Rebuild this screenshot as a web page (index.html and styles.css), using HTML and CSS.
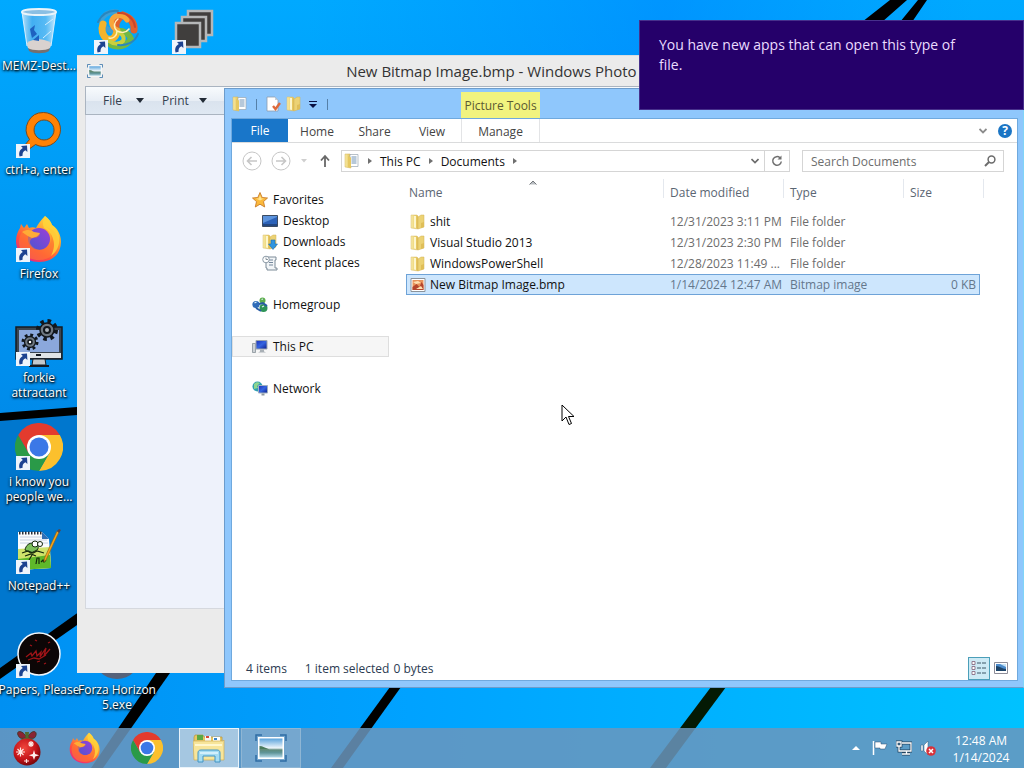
FILE: index.html
```html
<!DOCTYPE html>
<html lang="en">
<head>
<meta charset="UTF-8">
<title>Desktop</title>
<link rel="stylesheet" href="styles.css">
</head>
<body>
<svg class="defs" aria-hidden="true">
  <defs>
    <linearGradient id="sky" x1="0" y1="0" x2="0" y2="1">
      <stop offset="0" stop-color="#00a9ff"/>
      <stop offset="1" stop-color="#008bea"/>
    </linearGradient>
    <linearGradient id="floor" x1="0" y1="0" x2="1" y2="0">
      <stop offset="0" stop-color="#0090f2"/>
      <stop offset="0.4" stop-color="#00a2ff"/>
      <stop offset="1" stop-color="#00c2ff"/>
    </linearGradient>
    <linearGradient id="topShade" x1="0" y1="0" x2="1" y2="0">
      <stop offset="0.3" stop-color="#0080ff" stop-opacity="0"/>
      <stop offset="0.65" stop-color="#0078ff" stop-opacity="0.4"/>
      <stop offset="0.95" stop-color="#0080ff" stop-opacity="0"/>
    </linearGradient>
    <linearGradient id="foxBody" x1="0.9" y1="0" x2="0.2" y2="1">
      <stop offset="0" stop-color="#fff44f"/>
      <stop offset="0.35" stop-color="#ffa52e"/>
      <stop offset="0.7" stop-color="#ff4f3f"/>
      <stop offset="1" stop-color="#e5228d"/>
    </linearGradient>
    <linearGradient id="foxGlobe" x1="0" y1="1" x2="1" y2="0">
      <stop offset="0" stop-color="#4a56d0"/>
      <stop offset="1" stop-color="#9b3fd8"/>
    </linearGradient>
    <linearGradient id="folderFill" x1="0" y1="0" x2="1" y2="0">
      <stop offset="0" stop-color="#f8eca8"/>
      <stop offset="1" stop-color="#e2bd4c"/>
    </linearGradient>
    <linearGradient id="screenFill" x1="0" y1="0" x2="1" y2="1">
      <stop offset="0" stop-color="#1b2fb8"/>
      <stop offset="0.5" stop-color="#3565e0"/>
      <stop offset="1" stop-color="#0b1c8c"/>
    </linearGradient>
    <linearGradient id="glass" x1="0" y1="0" x2="1" y2="0">
      <stop offset="0" stop-color="#cfe9fa" stop-opacity="0.9"/>
      <stop offset="0.3" stop-color="#5eb2ec" stop-opacity="0.7"/>
      <stop offset="0.7" stop-color="#7cc2f0" stop-opacity="0.7"/>
      <stop offset="1" stop-color="#e4f4ff" stop-opacity="0.9"/>
    </linearGradient>
    <linearGradient id="photo" x1="0" y1="0" x2="0" y2="1">
      <stop offset="0" stop-color="#5aa3dc"/>
      <stop offset="0.5" stop-color="#eef6fb"/>
      <stop offset="0.6" stop-color="#5d8a7c"/>
      <stop offset="0.75" stop-color="#5f9599"/>
      <stop offset="1" stop-color="#b4d8e8"/>
    </linearGradient>
    <radialGradient id="ball" cx="0.4" cy="0.35" r="0.7">
      <stop offset="0" stop-color="#f0453c"/>
      <stop offset="0.6" stop-color="#c5141a"/>
      <stop offset="1" stop-color="#6d0509"/>
    </radialGradient>
  </defs>

  <symbol id="shortcut" viewBox="0 0 14 14">
    <path d="M0 0h14v14H0z" fill="#eef4fb"/>
    <path d="M5 2l6-.4L11.4 8 9.4 6.2C7 7.600 6.300 9 6.600 11.800L3.600 12.400C2.400 8.600 4 5.600 6.800 4z" fill="#1c4290"/>
  </symbol>

  <symbol id="firefox" viewBox="0 0 48 48">
    <path d="M30 1c4 3 6 6 7 9 5 3 9 9 9 17 0 12-9 20-22 20S1 38 1 26c0-6 2-10 4-13l1-4 3 4 3-4 2 4c2-1 5-1 7 0 2-4 5-8 9-12z" fill="url(#foxBody)"/>
    <circle cx="24" cy="24" r="11" fill="url(#foxGlobe)"/>
    <path d="M7 17c5-2 9-1 12 1l6 1c-1 3-4 4-7 4-3 1-4 4-2 7 4 6 12 6 17 1 6-6 4-15-2-19 9 2 13 9 12 18-2 10-10 15-19 15C12 45 4 38 4 27c0-4 1-7 3-10z" fill="#ff7a2f" opacity="0.6"/>
    <path d="M30 1c4 3 6 6 7 9 6 5 8 11 7 18-1 6-4 10-8 13 3-6 4-12 2-17-1-5-5-9-9-11-2-4-1-8 1-12z" fill="#ffd53a" opacity="0.85"/>
    <path d="M7 17c5-3 9-2 12 0l6 1c-2 4-5 4-8 5-3-1-6-3-10-6z" fill="#ffab36"/>
  </symbol>

  <symbol id="chrome" viewBox="0 0 48 48">
    <path d="M24 12h20.800A24 24 0 0 1 24 48l10.400-18z" fill="#fbc02d"/>
    <path d="M3.200 12A24 24 0 0 0 24 48l10.400-18H13.600z" fill="#2a9a48"/>
    <path d="M3.200 12A24 24 0 0 1 44.800 12H24L13.600 30z" fill="#e33b2e"/>
    <circle cx="24" cy="24" r="12" fill="#fff"/>
    <circle cx="24" cy="24" r="9.500" fill="#3b78e7"/>
  </symbol>

  <symbol id="folder" viewBox="0 0 16 16">
    <path d="M1 1h6l1 1v13l-7-1z" fill="url(#folderFill)" stroke="#d9be6c" stroke-width="0.5"/>
    <path d="M8 3l3-2h3v12l-6 2z" fill="#ecd274" stroke="#d2b257" stroke-width="0.5"/>
    <path d="M11 9l3-1v5l-3 1z" fill="#dfbe58"/>
    <path d="M4 2h2v12l-2-.4z" fill="#fdf6cd"/>
  </symbol>

  <symbol id="docs" viewBox="0 0 16 16">
    <path d="M1 1h5l1 1v13l-6-1z" fill="url(#folderFill)" stroke="#d2b257" stroke-width="0.500"/>
    <path d="M6 1.500h8v12H6z" fill="#fff" stroke="#9aa6b2" stroke-width="0.700"/>
    <path d="M7.500 4h5M7.500 6h5M7.500 8h5M7.500 10h5" stroke="#5f86ad" stroke-width="0.900"/>
    <path d="M4 3l3 1.500V15l-3-1z" fill="#e6c861"/>
  </symbol>

  <symbol id="photos" viewBox="0 0 32 28">
    <path d="M3 3h26v22H3z" fill="#fff"/>
    <path d="M4.500 4.500h23v19h-23z" fill="url(#photo)"/>
    <path d="M4.500 12c3 0 6 2 10 3.500h-10z" fill="#4a7a5c"/>
    <path d="M1 7V1h6M25 1h6v6M31 21v6h-6M7 27H1v-6" fill="none" stroke="#2f6ea5" stroke-width="1.500"/>
  </symbol>
</svg>

<div class="desktop">
  <svg class="wallpaper" viewBox="0 0 1024 768" preserveAspectRatio="none" aria-hidden="true">
    <path d="M0 0h1024v768H0z" fill="url(#floor)"/>
    <path d="M0 0h1024v340L0 414z" fill="url(#sky)"/>
    <path d="M0 0h1024v200H0z" fill="url(#topShade)"/>
    <path d="M0 414l200-14v130L0 672z" fill="#0077ce"/>
    <path d="M0 413l90-7v8L0 421z"/>
    <path d="M0 668l90-64v12L0 679z"/>
    <path d="M156 673h14l-67 95H91z"/>
    <path d="M390 687h11l-58 81h-12z"/>
    <path d="M711 687h15l-60 81h-16z" fill="#041a04"/>
    <path d="M862 22l28-22h17l-25 22zM900 22l18-22h9l-15 22z"/>
  </svg>

  <div class="desktop-icons">
    <a class="desktop-icon" href="#">
      <svg viewBox="0 0 48 48" aria-hidden="true">
        <path d="M7 5l5 34c1 6 23 6 24 0L41 5z" fill="url(#glass)"/>
        <path d="M12 36c6-5 17-5 24 0l-1 5c-4 5-18 5-22 0z" fill="#d9d2cf"/>
        <path d="M13 41c4 3 18 3 22 0l-1 3c-4 3-16 3-20 0z" fill="#75706f"/>
        <path d="M15 22l5-4-1 5 3 4-5 4-1-4zM18 33l6-5v6z" fill="#1e62c0"/>
        <path d="M7 5l5 34M41 5l-5 34M30 18l8-6M28 31l8-7" fill="none" stroke="#d6efff" stroke-width="1"/>
        <ellipse cx="24" cy="5" rx="17" ry="3" fill="#8bbfe3" stroke="#eaf4fa" stroke-width="2"/>
      </svg>
      <span>MEMZ-Dest...</span>
    </a>
    <a class="desktop-icon" href="#">
      <svg viewBox="0 0 48 48" aria-hidden="true">
        <g fill="none" stroke-linecap="round">
          <path d="M24 24c-7 1-14-3-16-10C11 7 17 4 24 5" stroke="#3d9fd6" stroke-width="5"/>
          <path d="M24 24c-3-6 0-13 6-16 7 2 12 8 11 15" stroke="#e2602c" stroke-width="7"/>
          <path d="M24 24c7-1 12 3 14 8-4 7-13 9-20 6" stroke="#72b842" stroke-width="6"/>
          <path d="M24 24c-1 7-5 9-10 8-5-4-6-10-4-15" stroke="#f4b42c" stroke-width="7"/>
          <path d="M24 23c-5-2-7-8-4-12 4-4 11-3 14 2" stroke="#f8a53a" stroke-width="5"/>
          <path d="M24 25c5 1 8 5 6 9-4 4-10 3-14 0" stroke="#c9cf3e" stroke-width="4"/>
          <path d="M5 15C9 7 16 3 25 4M45 27c-3 8-11 12-20 11" stroke="#2a86bd" stroke-width="2"/>
          <path d="M25 6c9-1 16 6 17 14" stroke="#c9452a" stroke-width="2"/>
          <path d="M24 24c-4-4-3-9 1-12M24 24c4 2 9 2 12-2M24 24c0 5-4 8-8 7" stroke="#fff0b8" stroke-width="1.500"/>
        </g>
      </svg>
      <svg class="shortcut" aria-hidden="true"><use href="#shortcut"/></svg>
    </a>
    <a class="desktop-icon" href="#">
      <svg viewBox="0 0 48 48" aria-hidden="true">
        <g fill="#403e3d" stroke="#b5b7b8" stroke-width="2.500">
          <path d="M17 4h24v24H17z"/>
          <path d="M11 10h24v24H11z"/>
          <path d="M5 16h24v24H5z"/>
        </g>
      </svg>
      <svg class="shortcut" aria-hidden="true"><use href="#shortcut"/></svg>
    </a>
    <a class="desktop-icon col-1" href="#">
      <svg viewBox="0 0 48 48" aria-hidden="true">
        <path d="M28.500 1.500a17 17 0 1 1-8 32l-7 5-4-4 5-6a17 17 0 0 1 14-27zM29 9a10 10 0 1 0 .1 0z" fill="#ff8205" fill-rule="evenodd" stroke="#7a4a1c" stroke-width="1"/>
      </svg>
      <svg class="shortcut" aria-hidden="true"><use href="#shortcut"/></svg>
      <span>ctrl+a, enter</span>
    </a>
    <a class="desktop-icon col-1" href="#">
      <svg aria-hidden="true"><use href="#firefox"/></svg>
      <svg class="shortcut" aria-hidden="true"><use href="#shortcut"/></svg>
      <span>Firefox</span>
    </a>
    <a class="desktop-icon col-1" href="#">
      <svg viewBox="0 0 48 48" aria-hidden="true">
        <path d="M1 8h46v32H1z" fill="#3c4650" stroke="#151b22" stroke-width="1.500"/>
        <path d="M4 11h40v22H4z" fill="#8ba8dc"/>
        <path d="M2 34h44v5H2z" fill="#dfe3e6"/>
        <path d="M21 36h5" stroke="#151b22" stroke-width="2"/>
        <path d="M18 40h12l1 6H17z" fill="#c3c9cd" stroke="#151b22"/>
        <path d="M14 47h20" stroke="#151b22" stroke-width="2"/>
        <g fill="none" stroke="#12171c">
          <circle cx="32" cy="11" r="9" stroke-width="4" stroke-dasharray="3.500 3.600"/>
          <circle cx="32" cy="11" r="7" fill="#6f7881" stroke-width="1.500"/>
          <circle cx="32" cy="11" r="3" fill="#a8b0b8" stroke-width="2"/>
          <circle cx="15" cy="23" r="7" stroke-width="3" stroke-dasharray="2.800 2.700"/>
          <circle cx="15" cy="23" r="5.500" fill="#6f7881" stroke-width="1.300"/>
          <circle cx="15" cy="23" r="2" fill="#fff" stroke-width="1.500"/>
        </g>
      </svg>
      <svg class="shortcut" aria-hidden="true"><use href="#shortcut"/></svg>
      <span>forkie<br>attractant</span>
    </a>
    <a class="desktop-icon col-1" href="#">
      <svg aria-hidden="true"><use href="#chrome"/></svg>
      <svg class="shortcut" aria-hidden="true"><use href="#shortcut"/></svg>
      <span>i know you<br>people we...</span>
    </a>
    <a class="desktop-icon col-1" href="#">
      <svg viewBox="0 0 48 48" aria-hidden="true">
        <path d="M3 5h24l7 7 2 29-33 2z" fill="#fbfcfd"/>
        <path d="M3 22l32-2 1 21-33 2z" fill="#cfe36a"/>
        <path d="M3 32l32-4 1 13-33 2z" fill="#5fb82a"/>
        <path d="M5 10h22M5 13h27M5 16h28" stroke="#b9c4d8" stroke-width="0.800"/>
        <path d="M4 6h23" stroke="#2a2f38" stroke-width="3" stroke-dasharray="1.500 1.500"/>
        <path d="M27 5v7h7z" fill="#2f6fb4"/>
        <path d="M10 23c1-5 4-7 8-7 4 0 7 4 4 7l-6 3z" fill="#7cbf5b" stroke="#14280c"/>
        <circle cx="20" cy="17" r="3" fill="#fff" stroke="#14280c"/>
        <circle cx="25" cy="17" r="2.500" fill="#fff" stroke="#14280c"/>
        <path d="M7 26l6-2 5 2 4-2 7 2M10 29l6-2 5 2M14 33l3-5M21 37l1-6 2 0v6M26 35l2-2 1 2 2-2" fill="none" stroke="#14280c" stroke-width="1.200"/>
        <path d="M44 5l-13 28-2 2 .5-4L42 4z" fill="#f5a51c" stroke="#8a5a14" stroke-width="0.600"/>
        <path d="M42 4l2-2 2 1-2 3z" fill="#564549"/>
      </svg>
      <svg class="shortcut" aria-hidden="true"><use href="#shortcut"/></svg>
      <span>Notepad++</span>
    </a>
    <a class="desktop-icon col-1" href="#">
      <svg viewBox="0 0 48 48" aria-hidden="true">
        <circle cx="24" cy="23" r="21" fill="#0c0606" stroke="#f2f6fa" stroke-width="1.500"/>
        <path d="M11 26l5-4 1 3 4-5 1 5 4-4-1 5 6-9-2 8 6-7M13 29l6-2 5 1 7-4M20 9l2 1M15 14l2 1M33 12l2-1M29 33l2-1M22 31l3-1" fill="none" stroke="#a01418" stroke-width="1.300"/>
      </svg>
      <svg class="shortcut" aria-hidden="true"><use href="#shortcut"/></svg>
      <span>Papers, Please</span>
    </a>
    <a class="desktop-icon" href="#">
      <svg viewBox="0 0 48 48" aria-hidden="true">
        <circle cx="24" cy="24" r="24" fill="#56627a"/>
      </svg>
      <span>Forza Horizon<br>5.exe</span>
    </a>
  </div>

  <section class="window viewer">
    <header class="viewer-title">
      <svg class="icon-16" aria-hidden="true"><use href="#photos"/></svg>
      <h1>New Bitmap Image.bmp - Windows Photo Viewer</h1>
    </header>
    <div class="viewer-menu">
      <button type="button">File <i class="caret"></i></button>
      <button type="button">Print <i class="caret"></i></button>
    </div>
    <div class="viewer-canvas"></div>
    <footer class="viewer-controls"></footer>
  </section>

  <section class="window explorer">
    <header class="explorer-title">
      <div class="quick-access">
        <svg class="icon-16" aria-hidden="true"><use href="#docs"/></svg>
        <i class="rule"></i>
        <button type="button" aria-label="Properties">
          <svg class="icon-16" viewBox="0 0 16 16" aria-hidden="true">
            <path d="M2 1h8l3 3v11H2z" fill="#fff" stroke="#8d9cad" stroke-width="0.800"/>
            <path d="M10 1v3h3z" fill="#c4d0dc"/>
            <path d="M8 10l2.500 3L15 7" fill="none" stroke="#dd6a3c" stroke-width="2.400"/>
          </svg>
        </button>
        <button type="button" aria-label="New folder">
          <svg class="icon-16" aria-hidden="true"><use href="#folder"/></svg>
        </button>
        <button type="button" class="customize" aria-label="Customize">
          <svg class="icon-8" viewBox="0 0 8 8" aria-hidden="true"><path d="M0 1h8v1H0zM0 4h8L4 8z" fill="#0a1244"/></svg>
        </button>
        <i class="rule"></i>
      </div>
      <div class="tool-group">Picture Tools</div>
    </header>

    <div class="explorer-body">
      <div class="ribbon">
        <button type="button" class="tab tab-file">File</button>
        <button type="button" class="tab">Home</button>
        <button type="button" class="tab">Share</button>
        <button type="button" class="tab">View</button>
        <button type="button" class="tab tab-manage">Manage</button>
        <div class="ribbon-end">
          <button type="button" aria-label="Expand the ribbon">
            <svg class="icon-8" viewBox="0 0 8 8" aria-hidden="true"><path d="M0.500 2L4 5.500 7.500 2" fill="none" stroke="#8b8b8b" stroke-width="1.800"/></svg>
          </button>
          <button type="button" class="help" aria-label="Help">?</button>
        </div>
      </div>

      <div class="address-row">
        <div class="history">
          <button type="button" aria-label="Back">
            <svg class="icon-20" viewBox="0 0 20 20" aria-hidden="true" fill="none" stroke="#c6c6c6">
              <circle cx="10" cy="10" r="9"/><path d="M15 10H6M9.500 6L5.500 10l4 4" stroke-width="1.600"/>
            </svg>
          </button>
          <button type="button" aria-label="Forward">
            <svg class="icon-20" viewBox="0 0 20 20" aria-hidden="true" fill="none" stroke="#c6c6c6">
              <circle cx="10" cy="10" r="9"/><path d="M5 10h9M10.500 6l4 4-4 4" stroke-width="1.600"/>
            </svg>
          </button>
          <button type="button" aria-label="Recent locations">
            <svg class="icon-8" viewBox="0 0 8 8" aria-hidden="true"><path d="M1 2h6L4 5.500z" fill="#cfcfcf"/></svg>
          </button>
          <button type="button" aria-label="Up">
            <svg class="icon-16" viewBox="0 0 16 16" aria-hidden="true"><path d="M8 14V3M4 7.500L8 3l4 4.500" fill="none" stroke="#686868" stroke-width="1.800"/></svg>
          </button>
        </div>
        <div class="address">
          <svg class="icon-16" aria-hidden="true"><use href="#docs"/></svg>
          <i class="chevron"></i>
          <a href="#">This PC</a>
          <i class="chevron"></i>
          <a href="#">Documents</a>
          <i class="chevron"></i>
          <button type="button" class="previous" aria-label="Previous locations">
            <svg class="icon-8" viewBox="0 0 8 8" aria-hidden="true"><path d="M0.500 2L4 5.500 7.500 2" fill="none" stroke="#6a6a6a" stroke-width="1.600"/></svg>
          </button>
          <button type="button" class="refresh" aria-label="Refresh">
            <svg class="icon-12" viewBox="0 0 12 12" aria-hidden="true"><path d="M9 2.800A4.300 4.300 0 1 0 10.300 6.500" fill="none" stroke="#707070" stroke-width="1.500"/><path d="M6.500 4.500h4V0.500z" fill="#707070"/></svg>
          </button>
        </div>
        <div class="search">
          <input type="search" placeholder="Search Documents" aria-label="Search Documents">
          <svg class="icon-12" viewBox="0 0 12 12" aria-hidden="true"><circle cx="7.500" cy="4.500" r="3.400" fill="none" stroke="#6c6c6c" stroke-width="1.500"/><path d="M5 7l-4 4" stroke="#6c6c6c" stroke-width="2"/></svg>
        </div>
      </div>

      <div class="panes">
        <nav class="tree">
          <ul>
            <li><a href="#">
              <svg class="icon-16" viewBox="0 0 16 16" aria-hidden="true"><path d="M8 0.500l2.200 5 5.300.5-4 3.600 1.200 5.400L8 12.200 3.300 15l1.200-5.400-4-3.600 5.300-.5z" fill="#fbb93b" stroke="#c87d2a" stroke-width="0.900"/><path d="M8 3l1.300 3.500H12L8 8.500 4 6.500h2.700z" fill="#ffe58f"/></svg>
              Favorites</a></li>
            <li class="child"><a href="#">
              <svg class="icon-16" viewBox="0 0 16 16" aria-hidden="true"><path d="M0.500 2.500h15v11h-15z" fill="#2c62b8" stroke="#3c4c62"/><path d="M1 3h14v1L1 10z" fill="#5d94dd"/><path d="M1 12h14" stroke="#1a2c4a"/></svg>
              Desktop</a></li>
            <li class="child"><a href="#">
              <svg class="icon-16" viewBox="0 0 16 16" aria-hidden="true"><use href="#folder"/><path d="M9 6h4v4h2.500L11 15.500 6.500 10H9z" fill="#2f95e0" stroke="#1c6cae" stroke-width="0.600"/></svg>
              Downloads</a></li>
            <li class="child"><a href="#">
              <svg class="icon-16" viewBox="0 0 16 16" aria-hidden="true"><path d="M5 2h9v3h-1v8h2v2H5v-2H4V7" fill="#f2f5f7" stroke="#7d8b98"/><path d="M7 5h4M7 7.500h4M7 10h4" stroke="#75879b"/><circle cx="4" cy="4.500" r="3.300" fill="#fff" stroke="#8c9aa6"/><path d="M4 2.500v2h2" fill="none" stroke="#6f7d89" stroke-width="0.800"/></svg>
              Recent places</a></li>
          </ul>
          <ul>
            <li><a href="#">
              <svg class="icon-16" viewBox="0 0 16 16" aria-hidden="true"><circle cx="10.500" cy="3.500" r="3" fill="#5eae4d"/><circle cx="4" cy="7.500" r="3.600" fill="#2f6cb8"/><circle cx="11.500" cy="11" r="4" fill="#2e9457"/><path d="M7 7l4-1 4 3M4 11l5 3" stroke="#285ba4" stroke-width="2" fill="none"/><path d="M2.500 6l2-1M10 10l2-1M9.500 2.500l1.500-.5" stroke="#d9eff9" stroke-width="1.300"/></svg>
              Homegroup</a></li>
          </ul>
          <ul>
            <li class="current"><a href="#">
              <svg class="icon-16" viewBox="0 0 16 16" aria-hidden="true"><path d="M0.500 4.500h3v9h-3z" fill="#cdd2d6" stroke="#7d868e" stroke-width="0.700"/><path d="M4 1.500h11v8.500H4z" fill="url(#screenFill)" stroke="#9aa4ae"/><path d="M8 10.500h4v2l2 1H6l2-1z" fill="#a9b0b6"/></svg>
              This PC</a></li>
          </ul>
          <ul>
            <li><a href="#">
              <svg class="icon-16" viewBox="0 0 16 16" aria-hidden="true"><circle cx="5.500" cy="5.500" r="5" fill="#2f9fb2"/><path d="M2 3c2-2 4-2 6-1L5 5l1 2-4 1z" fill="#8ed58e"/><path d="M6.500 4.500h9v7.500h-9z" fill="url(#screenFill)" stroke="#9fb0c0"/><path d="M9.500 12.500h3v2h-3z" fill="#8f989f"/></svg>
              Network</a></li>
          </ul>
        </nav>

        <main class="files">
          <svg class="sort-mark icon-8" viewBox="0 0 8 8" aria-hidden="true"><path d="M0.500 5.500L4 2l3.500 3.500" fill="#b9bdc2" stroke="#74787c"/></svg>
          <table>
            <colgroup>
              <col class="col-name">
              <col class="col-date">
              <col class="col-type">
              <col class="col-size">
              <col class="col-edge">
            </colgroup>
            <thead>
              <tr><th class="name">Name</th><th>Date modified</th><th>Type</th><th class="last">Size</th><th class="edge"></th></tr>
            </thead>
            <tbody>
              <tr><td class="name"><svg class="icon-16" aria-hidden="true"><use href="#folder"/></svg>shit</td><td>12/31/2023 3:11 PM</td><td>File folder</td><td class="size"></td></tr>
              <tr><td class="name"><svg class="icon-16" aria-hidden="true"><use href="#folder"/></svg>Visual Studio 2013</td><td>12/31/2023 2:30 PM</td><td>File folder</td><td class="size"></td></tr>
              <tr><td class="name"><svg class="icon-16" aria-hidden="true"><use href="#folder"/></svg>WindowsPowerShell</td><td>12/28/2023 11:49 ...</td><td>File folder</td><td class="size"></td></tr>
              <tr class="selected"><td class="name"><svg class="icon-16" viewBox="0 0 16 16" aria-hidden="true"><path d="M1 1.500h14v13H1z" fill="#fff" stroke="#8b939b"/><path d="M2.500 3h11v10h-11z" fill="#e8935a"/><path d="M2.500 10l4-3 3 3 2-5 2 3v5h-11z" fill="#b5452c"/><path d="M3 5l5-1 3 2-5 1zM6 12l5-3 2 3z" fill="#ffe0b0"/></svg>New Bitmap Image.bmp</td><td>1/14/2024 12:47 AM</td><td>Bitmap image</td><td class="size">0 KB</td></tr>
            </tbody>
          </table>
        </main>
      </div>

      <footer class="status">
        <span class="count">4 items</span>
        <span>1 item selected</span>
        <span class="bytes">0 bytes</span>
        <button type="button" class="view-mode active" aria-label="Details view">
          <svg class="icon-16" viewBox="0 0 16 16" aria-hidden="true"><g fill="#fff" stroke="#8a6f86" stroke-width="0.900"><path d="M1 1.500h3v3H1zM1 6.500h3v3H1zM1 11.500h3v3H1z"/></g><path d="M6 3h4M11 3h4M6 8h4M11 8h4M6 13h4M11 13h4" stroke="#3d5666"/></svg>
        </button>
        <button type="button" class="view-mode" aria-label="Thumbnail view">
          <svg class="icon-14" viewBox="0 0 14 14" aria-hidden="true"><path d="M0.500 1.500h13v11h-13z" fill="#fff" stroke="#8d8d98"/><path d="M2 3h10v7H2z" fill="#4c8ccc"/><path d="M2 5c4 0 6 3 10 3v2H2z" fill="#1d4468"/><path d="M6 3h6v3z" fill="#c5e2f5"/></svg>
        </button>
      </footer>
    </div>
  </section>

  <aside class="toast">You have new apps that can open this type of file.</aside>

  <svg class="pointer" viewBox="0 0 14 22" aria-hidden="true">
    <path d="M1 1v16l4-4 3 7.500 2.500-1L7.500 12.500H13z" fill="#fff" stroke="#000"/>
  </svg>

  <footer class="taskbar">
    <button type="button" class="start" aria-label="Start">
      <svg viewBox="0 0 32 36" aria-hidden="true">
        <path d="M16 8C12 0 5 0 7 5s5 3 9 3c4 0 8 2 9-3s-5-5-9 3z" fill="#8a2433" stroke="#4a3428"/>
        <path d="M14 2h4l-1 9h-2zM9 10l7-3 7 3-7 1z" fill="#506b2f"/>
        <circle cx="16" cy="22" r="13.500" fill="url(#ball)"/>
        <path d="M5 22h9M9.500 17.500v9M6.500 19l6 6M12.500 19l-6 6M17 14h6M20 11v6M18 12l4 4M22 12l-4 4M13 31h5M15.500 29v4" stroke="#ffe6e2" stroke-width="1.200"/>
        <path d="M23 20l1.200 4 4 1.200-4 1.200L23 30l-1.200-3.600-4-1.200 4-1.200z" fill="#fff1ee"/>
      </svg>
    </button>
    <button type="button" class="task" aria-label="Firefox"><svg class="icon-32" aria-hidden="true"><use href="#firefox"/></svg></button>
    <button type="button" class="task" aria-label="Chrome"><svg class="icon-32" aria-hidden="true"><use href="#chrome"/></svg></button>
    <button type="button" class="task running focused" aria-label="Documents">
      <svg class="icon-32" viewBox="0 0 32 32" aria-hidden="true">
        <path d="M1 5l1-2h8l1 2h18v8H1z" fill="#e7c765" stroke="#b7973d" stroke-width="0.700"/>
        <path d="M4 3h6v5H4z" fill="#5aa845"/><path d="M12 4h6v5h-6z" fill="#f7f7f2"/><path d="M13 4h3v2h-3z" fill="#d64a3a"/><path d="M20 5h7v4h-7z" fill="#fff"/><path d="M21 6h3v2h-3z" fill="#3a85c8"/>
        <path d="M0 9h30l1-1v20H1z" fill="#f7e59a" stroke="#cfae53" stroke-width="0.700"/>
        <path d="M2 13h27" stroke="#fff7cf" stroke-width="2"/>
        <path d="M5 30v-9c0-2 1-3 3-3h16c2 0 3 1 3 3v9h-5v-6H10v6z" fill="#a5dcf2" stroke="#4194c4"/>
        <path d="M7 21h18" stroke="#e2f6ff" stroke-width="1.500"/>
      </svg>
    </button>
    <button type="button" class="task running" aria-label="Photo Viewer"><svg class="icon-32" aria-hidden="true"><use href="#photos"/></svg></button>

    <div class="tray">
      <svg class="icon-8" viewBox="0 0 8 8" aria-hidden="true"><path d="M0 6l4-4 4 4z" fill="#fff"/></svg>
      <svg class="icon-16" viewBox="0 0 16 16" aria-hidden="true"><path d="M1.500 1v14" stroke="#fff" stroke-width="1.500"/><path d="M3 2h6v2h6l-2 5H8V8H3z" fill="#fff" stroke="#2d4f70" stroke-width="0.500"/></svg>
      <svg class="icon-16" viewBox="0 0 16 16" aria-hidden="true"><g fill="none" stroke="#22435f" stroke-width="2.800"><path d="M6 3h9v8H6M10.500 11v3M6 14h8M1 2h4v4H1zM3 6v5h3"/></g><g fill="none" stroke="#fff" stroke-width="1.300"><path d="M6 3h9v8H6M10.500 11v3M6 14h8M1 2h4v4H1zM3 6v5h3"/></g></svg>
      <svg class="icon-16" viewBox="0 0 16 16" aria-hidden="true"><path d="M1 5h2v6H1zM4 5l4-4v14l-4-4z" fill="#fff" stroke="#3a5d7d" stroke-width="0.500"/><circle cx="11" cy="11" r="4.800" fill="#d8323a"/><path d="M9 9l4 4M13 9l-4 4" stroke="#fff" stroke-width="1.500"/></svg>
    </div>
    <time class="clock" datetime="2024-01-14T00:48">12:48 AM<br>1/14/2024</time>
  </footer>
</div>
</body>
</html>
```
FILE: styles.css
```css
* {
  box-sizing: border-box;
}
body {
  margin: 0;
  font-family: "Open Sans", "Noto Sans", sans-serif;
  font-size: 12px;
  color: #111;
}
button {
  background: none;
  border: none;
  padding: 0;
  font: inherit;
  color: inherit;
}
a {
  color: inherit;
  text-decoration: none;
}
svg {
  display: block;
  flex: none;
}
.defs {
  position: absolute;
  width: 0;
  height: 0;
}
.icon-8 { width: 8px; height: 8px; }
.icon-12 { width: 12px; height: 12px; }
.icon-14 { width: 14px; height: 14px; }
.icon-16 { width: 16px; height: 16px; }
.icon-20 { width: 20px; height: 20px; }
.icon-32 { width: 32px; height: 32px; }

/* Desktop */
.desktop {
  position: relative;
  display: flex;
  flex-direction: column;
  height: 100vh;
  overflow: hidden;
}
.wallpaper {
  position: absolute;
  inset: 0;
  width: 100%;
  height: 100%;
}
.desktop-icons {
  position: relative;
  flex: 1;
  display: grid;
  grid-template-columns: repeat(3, 78px);
  grid-auto-rows: 104px;
  align-content: start;
}
.desktop-icon {
  position: relative;
  display: flex;
  flex-direction: column;
  align-items: center;
  gap: 3px;
  padding-top: 7px;
  color: white;
  line-height: 15px;
  text-align: center;
  white-space: nowrap;
  text-shadow: 1px 1px 2px black, 0 1px 3px black;
}
.desktop-icon svg {
  width: 48px;
  height: 48px;
}
.desktop-icon .shortcut {
  position: absolute;
  left: 16px;
  top: 40px;
  width: 14px;
  height: 14px;
}
.col-1 {
  grid-column: 1;
}

/* Windows */
.window {
  position: absolute;
  display: flex;
  flex-direction: column;
}
.viewer {
  left: 77px;
  right: 77px;
  top: 55px;
  bottom: 95px;
  padding: 0 8px;
  background-color: #ebebeb;
  border-top: 1px solid #d9dde0;
}
.viewer-title {
  display: flex;
  align-items: center;
  height: 30px;
  padding: 0 8px 0 2px;
}
.viewer-title h1 {
  flex: 1;
  margin: 0;
  font-size: 15px;
  font-weight: normal;
  line-height: 28px;
  color: #333;
  text-align: center;
}
.viewer-menu {
  display: flex;
  gap: 18px;
  height: 29px;
  padding-left: 17px;
  border: 1px solid #aab4c0;
  background: linear-gradient(#f8fbfd, #e8eef5 50%, #dae3ee 51%, #dfe8f2);
  color: #33404f;
}
.viewer-menu button {
  display: flex;
  align-items: center;
  gap: 14px;
}
.viewer-menu button + button {
  gap: 10px;
}
.caret {
  border: 4px solid transparent;
  border-top: 5px solid #222b36;
  border-bottom: none;
}
.viewer-canvas {
  flex: 1;
  background-color: #eef2fb;
  border: 1px solid #d5d8de;
  border-top: none;
}
.viewer-controls {
  height: 64px;
}
.explorer {
  left: 224px;
  right: 0;
  top: 88px;
  bottom: 80px;
  padding: 0 6px 7px 7px;
  background-color: #8fc7fc;
  border: 1px solid #6d9ccb;
  border-right-color: #7fd4f8;
}
.explorer-title {
  display: flex;
  height: 30px;
}
.quick-access {
  display: flex;
  align-items: center;
  gap: 5px;
  width: 229px;
}
.customize {
  display: grid;
  place-items: center;
  width: 12px;
}
.rule {
  width: 1px;
  height: 11px;
  margin: 0 3px;
  background-color: #5580a8;
}
.tool-group {
  width: 79px;
  margin-top: 3px;
  background-color: #f1f37f;
  color: #5c5a32;
  line-height: 28px;
  text-align: center;
}
.explorer-body {
  flex: 1;
  display: flex;
  flex-direction: column;
  background-color: white;
  outline: 1px solid #6fa9de;
}
.ribbon {
  display: grid;
  grid-template-columns: 56px 58px 57px 58px 79px 1fr;
  height: 24px;
  border-bottom: 1px solid #dadbdc;
}
.tab {
  padding-top: 2px;
  color: #444;
}
.tab-file {
  padding: 0;
  background-color: #1976c9;
  color: white;
}
.tab-manage {
  border: solid #e3e4e6;
  border-width: 0 1px;
}
.ribbon-end {
  display: flex;
  justify-content: flex-end;
  align-items: center;
  gap: 11px;
  padding-right: 5px;
}
.help {
  width: 14px;
  height: 14px;
  border-radius: 50%;
  background-color: #1b75c4;
  color: white;
  font-weight: bold;
  line-height: 14px;
}
.address-row {
  display: flex;
  align-items: center;
  height: 36px;
  padding: 0 13px 0 10px;
}
.history {
  display: flex;
  align-items: center;
  gap: 9px;
  width: 99px;
}
.address {
  flex: 1;
  display: flex;
  align-items: center;
  gap: 8px;
  height: 22px;
  margin-right: 12px;
  padding-left: 2px;
  border: 1px solid #d5d5d5;
}
.chevron {
  border: 3px solid transparent;
  border-left: 4px solid #6f6f6f;
  border-right: none;
}
.previous {
  margin-left: auto;
  margin-right: -3px;
}
.refresh {
  display: grid;
  place-items: center;
  width: 25px;
  height: 20px;
  border-left: 1px solid #d5d5d5;
}
.search {
  display: flex;
  align-items: center;
  width: 202px;
  height: 22px;
  padding: 0 7px 0 8px;
  border: 1px solid #d5d5d5;
}
.search input {
  flex: 1;
  min-width: 0;
  padding: 0;
  border: none;
  outline: none;
  font: inherit;
}
.search input::placeholder {
  color: #6d6d6d;
}

/* Navigation and file list */
.panes {
  flex: 1;
  display: flex;
}
.tree {
  width: 157px;
  padding-top: 10px;
}
.tree ul {
  list-style: none;
  margin: 0 0 21px;
  padding: 0;
}
.tree a {
  display: flex;
  align-items: center;
  gap: 5px;
  height: 21px;
  padding-left: 20px;
}
.tree .child a {
  padding-left: 30px;
}
.tree .current {
  background-color: #f6f6f6;
  outline: 1px solid #dedede;
  outline-offset: -1px;
}
.files {
  position: relative;
  flex: 1;
  padding-left: 17px;
}
.sort-mark {
  position: absolute;
  left: 140px;
  top: 0;
}
.files table {
  width: 578px;
  table-layout: fixed;
  border-collapse: collapse;
}
.col-name { width: 258px; }
.col-date { width: 120px; }
.col-type { width: 120px; }
.col-size { width: 76px; }
.col-edge { width: 4px; }
.files th {
  height: 32px;
  padding: 5px 6px 0;
  background: linear-gradient(#e4e8ee, #e4e8ee) no-repeat right top / 1px 19px;
  color: #5b6673;
  font-weight: normal;
  line-height: 18px;
  text-align: left;
  vertical-align: top;
}
.files th.name {
  padding-left: 3px;
}
.files th.last {
  background: none;
}
.files th.edge {
  padding: 0;
}
.files td {
  height: 21px;
  padding: 0 0 0 6px;
  color: #6d6d6d;
  line-height: 21px;
  white-space: nowrap;
}
.files td.name {
  display: flex;
  align-items: center;
  gap: 4px;
  padding-left: 4px;
  color: #111;
}
.files td.size {
  padding-right: 4px;
  text-align: right;
}
.files .selected td {
  background-color: #cde6fd;
  box-shadow: inset 0 1px #6ea3d8, inset 0 -1px #6ea3d8;
  color: #64778c;
}
.files .selected td.name {
  box-shadow: inset 0 1px #6ea3d8, inset 0 -1px #6ea3d8, inset 1px 0 #6ea3d8;
  color: #111;
}
.files .selected td.size {
  box-shadow: inset 0 1px #6ea3d8, inset 0 -1px #6ea3d8, inset -1px 0 #6ea3d8;
}
.status {
  display: flex;
  align-items: center;
  height: 24px;
  padding: 0 5px 0 14px;
  color: #2b3b52;
}
.count {
  margin-right: 18px;
}
.bytes {
  margin-left: 4px;
  margin-right: auto;
}
.view-mode {
  display: grid;
  place-items: center;
  width: 22px;
  height: 23px;
}
.view-mode.active {
  background-color: #cdeaf5;
  border: 1px solid #4b9fb9;
}

.toast {
  position: absolute;
  top: 20px;
  right: 0;
  width: 385px;
  height: 90px;
  padding: 14px 60px 0 19px;
  background-color: #25006a;
  border: 1px solid #47308c;
  color: #eadcff;
  font-size: 14px;
  line-height: 20px;
}
.pointer {
  position: absolute;
  left: 561px;
  top: 404px;
  width: 14px;
  height: 22px;
}

/* Taskbar */
.taskbar {
  position: relative;
  display: flex;
  align-items: stretch;
  gap: 2px;
  height: 40px;
  background-color: rgba(107, 150, 189, 0.85);
}
.start {
  display: grid;
  place-items: center;
  width: 53px;
}
.start svg {
  width: 32px;
  height: 36px;
}
.task {
  display: grid;
  place-items: center;
  width: 60px;
}
.running {
  background-color: rgba(180, 205, 225, 0.3);
  border: 1px solid #8fb6d4;
}
.focused {
  background-color: rgba(225, 238, 247, 0.55);
  border-color: #e9f3fa;
}
.tray {
  display: flex;
  align-items: center;
  gap: 8px;
  margin-left: auto;
}
.tray .icon-8 {
  margin-right: 4px;
}
.clock {
  width: 86px;
  padding-top: 4px;
  color: white;
  line-height: 17px;
  text-align: center;
}
```
